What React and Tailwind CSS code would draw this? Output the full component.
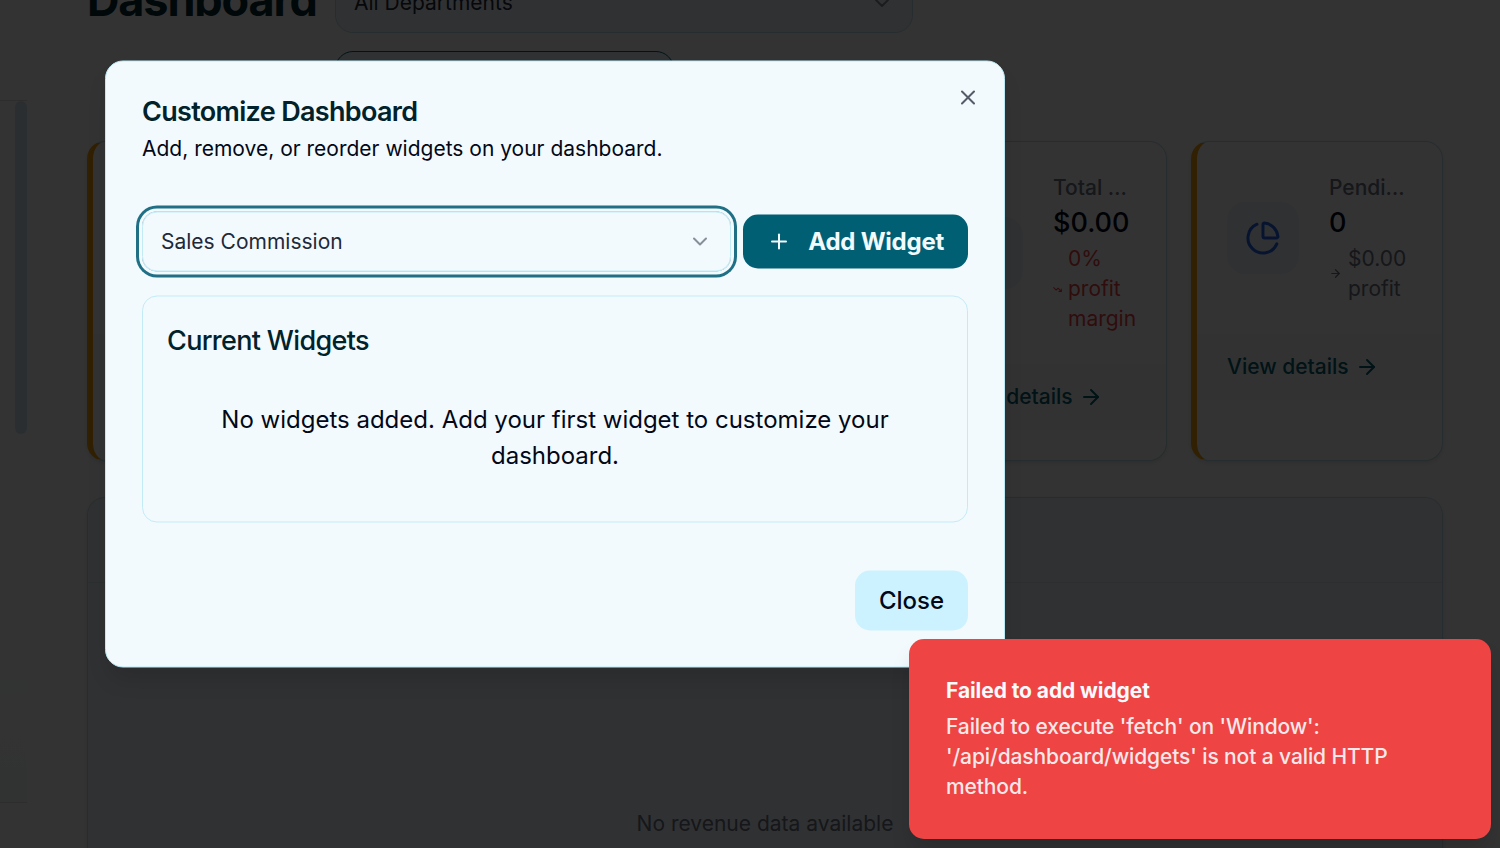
import React from "react";
import { ArrowRight, ChevronDown, ChartPie, Plus, TrendingDown, X } from "lucide-react";

function StatCard({ icon, title, value, trendIcon, trend, trendClass }) {
  return (
    <div className="flex h-80 w-[252px] shrink-0 flex-col overflow-hidden rounded-[18px] border border-l-[6px] border-[#bcdfe8] border-l-[#f59e0b] bg-white shadow-[0_2px_4px_rgba(0,0,0,0.1)]">
      <div className="flex items-center pt-[31px] pr-[28px] pb-[30px] pl-[30px]">
        <div className="mb-0.5 flex size-[72px] shrink-0 items-center justify-center rounded-[18px] bg-[#f1f5fd] text-[#2563eb]">
          {icon}
        </div>
        <div className="ml-[30px] min-w-0 flex-1">
          <div className="w-[78px] truncate text-[21px] leading-[30px] font-medium text-[#6b7280]">{title}</div>
          <div className="mt-0.5 mb-[3px] text-[27px] leading-9 font-medium text-[#020817]">{value}</div>
          <div className={`flex items-center gap-1.5 text-[21px] leading-[30px] ${trendClass}`}>
            {trendIcon}
            <span>{trend}</span>
          </div>
        </div>
      </div>
      <div className="flex items-center gap-1.5 bg-[#fbfbfb] px-[30px] py-[18px] text-[21px] leading-[30px] font-medium text-[#015f70]">
        <span className="whitespace-nowrap">View details</span>
        <ArrowRight size={24} strokeWidth={2} />
      </div>
    </div>
  );
}

function Sidebar() {
  return (
    <aside className="flex w-[27px] shrink-0 flex-col bg-[#fdfdfd]">
      <div className="h-[100px]" />
      <div className="flex h-[703px] justify-end border-y border-[#e2e2e2] bg-linear-to-b from-[#fdfdfd] from-80% to-[#f4fbf8]">
        <div className="h-[333px] w-3 rounded-full bg-[#d5e7ed]" />
      </div>
    </aside>
  );
}

function Page() {
  const pie = <ChartPie size={36} strokeWidth={2} />;
  const flat = <ArrowRight className="mb-0.5 shrink-0" size={13} strokeWidth={2.25} />;
  const down = <TrendingDown className="shrink-0" size={9} strokeWidth={2.75} />;
  return (
    <div className="flex h-full bg-[#fefefe]">
      <Sidebar />
      <main className="ml-[60px] flex w-[1356px] flex-col">
        <div className="-mt-[27px] flex h-[168px] shrink-0 items-start gap-[19px]">
          <h1 className="w-[229px] text-[45px] leading-[54px] font-bold tracking-[-0.025em] text-[#012a33]">Dashboard</h1>
          <div className="flex flex-col items-start gap-[18px]">
            <div className="flex h-[60px] w-[578px] items-center justify-between rounded-[18px] border border-[#bcdfe8] bg-[#f1f6fe] px-[18px] text-[21px] text-[#1f2937]">
              <span>All Departments</span>
              <ChevronDown size={24} strokeWidth={2} className="opacity-50" />
            </div>
            <div className="h-[60px] w-[339px] rounded-[18px] border border-[#015f70] bg-[#f1f6fe]" />
          </div>
        </div>
        <div className="flex gap-6">
          <StatCard icon={pie} title="Sales" value="0" trendIcon={flat} trend="0 sales" trendClass="text-[#6b7280]" />
          <StatCard icon={pie} title="Clients" value="0" trendIcon={flat} trend="0 new" trendClass="text-[#6b7280]" />
          <StatCard icon={pie} title="Orders" value="0" trendIcon={flat} trend="0 new" trendClass="text-[#6b7280]" />
          <StatCard icon={pie} title="Total Profit" value="$0.00" trendIcon={down} trend="0% profit margin" trendClass="text-[#ef4444]" />
          <StatCard icon={pie} title="Pending" value="0" trendIcon={flat} trend="$0.00 profit" trendClass="text-[#6b7280]" />
        </div>
        <section className="mt-9 h-[500px] shrink-0 rounded-[18px] border border-[#c4dfe8] bg-[#f1f6fc] shadow-[0_2px_4px_rgba(0,0,0,0.1)]">
          <div className="h-[85px] border-b border-[#dce8ee]" />
          <p className="pt-[226px] text-center text-[21px] leading-[30px] text-[#6b7280]">No revenue data available</p>
        </section>
      </main>
    </div>
  );
}

function CustomizeDialog() {
  return (
    <div className="absolute top-[364px] left-[555px] flex w-[900px] -translate-x-1/2 -translate-y-1/2 flex-col gap-6 rounded-[18px] border border-[#b9e9f5] bg-[#f2fafe] p-9 text-[#020817] shadow-[0_15px_22px_-4px_rgba(0,0,0,0.12)]">
      <header className="flex flex-col gap-[9px]">
        <h2 className="text-[27px] leading-[27px] font-semibold tracking-[-0.025em] text-[#01222a]">Customize Dashboard</h2>
        <p className="text-[21px] leading-[30px]">Add, remove, or reorder widgets on your dashboard.</p>
      </header>
      <div className="flex flex-col gap-6 py-6">
        <div className="flex items-center gap-3">
          <button className="flex h-[60px] w-[589px] items-center justify-between rounded-[15px] border border-[#c3ebf6] px-[18px] text-[21px] text-[#1f2937] ring-3 ring-[#1f6f85] ring-offset-3 ring-offset-[#f2fafe]">
            <span>Sales Commission</span>
            <ChevronDown size={24} strokeWidth={2} className="opacity-50" />
          </button>
          <button className="flex h-[54px] flex-1 items-center justify-between rounded-[15px] bg-[#015f73] px-6 text-2xl font-[650] tracking-[-0.01em] whitespace-nowrap text-[#f2fafe]">
            <Plus size={24} strokeWidth={2} />
            <span>Add Widget</span>
          </button>
        </div>
        <section className="rounded-[15px] border border-[#c3ebf6] p-6">
          <h3 className="mb-[18px] text-[27px] leading-[39px] font-medium tracking-[-0.025em] text-[#01222a]">Current Widgets</h3>
          <p className="py-6 text-center text-2xl leading-9">No widgets added. Add your first widget to customize your dashboard.</p>
        </section>
      </div>
      <footer className="flex justify-end">
        <button className="h-[60px] w-[113px] rounded-[15px] bg-[#cdf2ff] text-2xl font-medium">Close</button>
      </footer>
      <button aria-label="Close dialog" className="absolute top-6 right-6 opacity-65">
        <X size={24} strokeWidth={2} />
      </button>
    </div>
  );
}

function Toast() {
  return (
    <div className="absolute top-[639px] left-[909px] flex h-[200px] w-[582px] flex-col gap-1.5 rounded-[15px] bg-[#ef4444] p-[37px] text-[21px] leading-[30px] text-[#f8fafc] shadow-[0_15px_22px_-4px_rgba(0,0,0,0.15)]">
      <div className="font-[650] tracking-[-0.004em]">Failed to add widget</div>
      <div className="font-[450] tracking-[-0.005em] opacity-90">Failed to execute 'fetch' on 'Window': '/api/dashboard/widgets' is not a valid HTTP method.</div>
    </div>
  );
}

export default function App() {
  return (
    <div className="relative h-[848px] w-[1500px] overflow-hidden font-[Inter,sans-serif]">
      <Page />
      <div className="absolute inset-0 bg-black/80" />
      <CustomizeDialog />
      <Toast />
    </div>
  );
}
